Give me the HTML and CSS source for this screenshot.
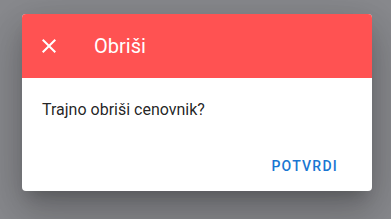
FILE: index.html
```html
<!DOCTYPE html>
<html lang="sr">
<head>
<meta charset="utf-8">
<title>Obriši</title>
<link rel="stylesheet" href="styles.css">
</head>
<body>
<div class="overlay">
  <div class="dialog">
    <header class="toolbar">
      <button class="icon-btn" aria-label="Zatvori">
        <svg width="24" height="24" viewBox="0 0 24 24"><path fill="#fff" d="M19,6.41L17.59,5L12,10.59L6.41,5L5,6.41L10.59,12L5,17.59L6.41,19L12,13.41L17.59,19L19,17.59L13.41,12L19,6.41Z"/></svg>
      </button>
      <div class="title">Obriši</div>
    </header>
    <div class="content">Trajno obriši cenovnik?</div>
    <div class="actions">
      <button class="text-btn">Potvrdi</button>
    </div>
  </div>
</div>
</body>
</html>
```
FILE: styles.css
```css
html, body {
  margin: 0;
  height: 100%;
}
body {
  background: #898a8e;
  font-family: Roboto, "Noto Sans", sans-serif;
}
.overlay {
  padding: 14px 0 0 22px;
}
.dialog {
  width: 350px;
  background: #fff;
  border-radius: 4px;
  overflow: hidden;
  box-shadow: 0 11px 15px -7px rgba(0,0,0,.2), 0 24px 38px 3px rgba(0,0,0,.14), 0 9px 46px 8px rgba(0,0,0,.12);
}
.toolbar {
  height: 64px;
  background: #ff5252;
  display: flex;
  align-items: center;
  padding-left: 13px;
}
.icon-btn {
  width: 28px;
  height: 28px;
  padding: 0;
  border: 0;
  background: none;
  display: flex;
  align-items: center;
  justify-content: center;
}
.title {
  margin-left: 31px;
  color: #fff;
  font-size: 20px;
  line-height: 28px;
}
.content {
  padding: 20px 20px 0 20px;
  font-size: 16px;
  line-height: 24px;
  color: rgba(0,0,0,.87);
  height: 42px;
}
.actions {
  display: flex;
  justify-content: flex-end;
  padding: 8px 18px 7px;
}
.text-btn {
  height: 36px;
  padding: 0 16px;
  border: 0;
  background: none;
  font-family: Roboto, "Noto Sans", sans-serif;
  font-size: 14px;
  font-weight: 500;
  letter-spacing: 0.0892857em;
  text-transform: uppercase;
  color: #1976d2;
}
```
